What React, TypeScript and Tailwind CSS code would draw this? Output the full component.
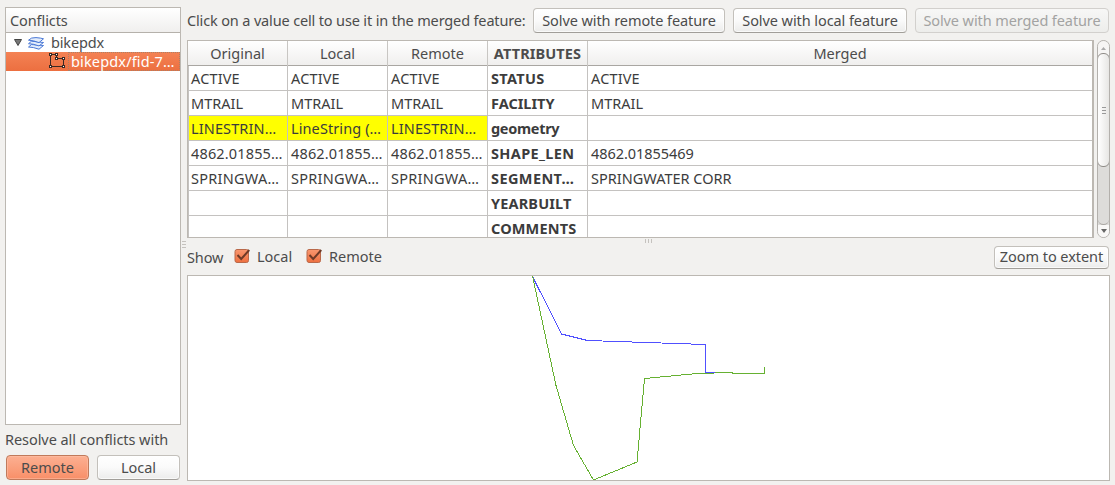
import type { ReactNode } from "react";

type Cell = { text: string; tracking: string };

const none: Cell = { text: "", tracking: "" };
const active: Cell = { text: "ACTIVE", tracking: "tracking-[0.15px]" };
const mtrail: Cell = { text: "MTRAIL", tracking: "tracking-[0px]" };
const line: Cell = { text: "LINESTRIN…", tracking: "tracking-[0.12px]" };
const length: Cell = { text: "4862.01855…", tracking: "tracking-[0.15px]" };
const spring: Cell = { text: "SPRINGWA…", tracking: "tracking-[0.25px]" };

type Row = { cells: Cell[]; name: Cell; merged: Cell; conflict?: boolean };

const rows: Row[] = [
  { cells: [active, active, active], name: { text: "STATUS", tracking: "tracking-[0.3px]" }, merged: active },
  { cells: [mtrail, mtrail, mtrail], name: { text: "FACILITY", tracking: "tracking-[0px]" }, merged: mtrail },
  {
    cells: [line, { text: "LineString (…", tracking: "tracking-[0.1px]" }, line],
    name: { text: "geometry", tracking: "tracking-[-0.3px]" },
    merged: none,
    conflict: true,
  },
  {
    cells: [length, length, length],
    name: { text: "SHAPE_LEN", tracking: "tracking-[0.35px]" },
    merged: { text: "4862.01855469", tracking: "tracking-[-0.05px]" },
  },
  {
    cells: [spring, spring, spring],
    name: { text: "SEGMENT…", tracking: "tracking-[0.4px]" },
    merged: { text: "SPRINGWATER CORR", tracking: "tracking-[0px]" },
  },
  { cells: [none, none, none], name: { text: "YEARBUILT", tracking: "tracking-[0.15px]" }, merged: none },
  { cells: [none, none, none], name: { text: "COMMENTS", tracking: "tracking-[0.15px]" }, merged: none },
];

function Button({ className, children }: { className: string; children: ReactNode }) {
  return (
    <button
      className={`flex shrink-0 items-center justify-center whitespace-nowrap rounded-[4px] border ${className}`}
    >
      {children}
    </button>
  );
}

const plain =
  "border-[#c3c0bb] border-b-[#a19e99] bg-linear-to-b from-white via-[#fafafa] to-[#ececeb] shadow-[inset_0_0_0_1px_#ffffffb0]";

function LayersIcon() {
  return (
    <svg className="ml-[5px] h-4 w-[18px] shrink-0" viewBox="0 0 18 16" fill="#e4edfb" stroke="#4a78d6" strokeWidth="1">
      <path d="M1.5 12 4.5 9.5 16.5 10.5 12 14.2Q6 12 1.5 12Z" />
      <path d="M1.5 8.7 4.5 6.2 16.5 7.5 12 10.9Q6 8.7 1.5 8.7Z" />
      <path d="M1.5 5.2Q4 2.2 9 2.6T16.5 3.8L12 7.6Q6 5.2 1.5 5.2Z" />
    </svg>
  );
}

function PolygonIcon() {
  return (
    <svg className="h-[17px] w-[17px] shrink-0" viewBox="0 0 17 17" fill="none" stroke="#3b2a24" shapeRendering="crispEdges">
      <path d="M1.5 1.5V13.5H14.5V5.5H7.5V1.5Z" />
      <path d="M.5 .5h2v2h-2zM6.5 .5h2v2h-2zM6.5 4.5h2v2h-2zM13.5 4.5h2v2h-2zM.5 12.5h2v2h-2zM13.5 12.5h2v2h-2z" fill="#fff" />
    </svg>
  );
}

function Check() {
  return (
    <svg className="-mt-[2px] h-4 w-4 shrink-0" viewBox="0 0 16 16" fill="none">
      <defs>
        <linearGradient id="check" x2="0" y2="1">
          <stop stopColor="#f9976f" />
          <stop offset="1" stopColor="#ee7040" />
        </linearGradient>
      </defs>
      <rect x="1" y="1.5" width="13.5" height="13" rx="2" fill="url(#check)" stroke="#b9694a" />
      <path d="M3.5 7 7.2 11 15.3 2" stroke="#6e3a27" strokeWidth="2" />
    </svg>
  );
}

function Tree() {
  return (
    <div className="flex h-[418px] flex-col border border-[#bcb8b2] bg-white">
      <div className="flex h-[25px] shrink-0 items-center border-b border-[#b5b1ab] bg-linear-to-b from-white to-[#f0efee] pl-1">
        <span className="tracking-[-0.1px]">Conflicts</span>
      </div>
      <div className="flex h-[19px] items-center pl-[8px]">
        <svg className="h-[7px] w-[8px]" viewBox="0 0 8 7">
          <path d="M.5 .5h7L4 6.5z" fill="#777" stroke="#444" />
        </svg>
        <LayersIcon />
        <span className="ml-[6px] tracking-[-0.15px]">bikepdx</span>
      </div>
      <div className="flex h-[19px] items-center bg-linear-to-b from-[#f48254] to-[#ec6f40] pl-[43px] text-white">
        <PolygonIcon />
        <div className="ml-[2px] flex h-[19px] flex-1 items-center border border-dotted border-[#aa8068] pl-[2px]">
          <span className="whitespace-nowrap tracking-[0.15px]">bikepdx/fid-7…</span>
        </div>
      </div>
    </div>
  );
}

const columns = "grid grid-cols-[100px_100px_100px_100px_504px]";

function Table() {
  return (
    <div className="h-[198px] w-[907px] overflow-hidden border border-r-2 border-[#bcb8b2] bg-white">
      <div className={`${columns} h-[25px] border-b border-[#a9a6a2] bg-linear-to-b from-white to-[#f0efee] leading-[25px]`}>
        <span className="border-r border-[#c8c6c3] text-center">Original</span>
        <span className="border-r border-[#c8c6c3] text-center">Local</span>
        <span className="border-r border-[#c8c6c3] text-center">Remote</span>
        <span className="border-r border-[#c8c6c3] text-center font-bold tracking-[0.1px]">ATTRIBUTES</span>
        <span className="text-center">Merged</span>
      </div>
      {rows.map((row) => (
        <div key={row.name.text} className={`${columns} h-[25px] border-b border-[#c4c2c0] leading-[25px] text-[#3c3c3c]`}>
          {row.cells.map((cell, i) => (
            <span
              key={i}
              className={`overflow-hidden whitespace-nowrap border-r border-[#c4c2c0] ${i === 0 ? "border-l pl-[2px]" : "pl-[3px]"} ${cell.tracking} ${row.conflict ? "bg-[#ffff00]" : ""}`}
            >
              {cell.text}
            </span>
          ))}
          <span className={`overflow-hidden whitespace-nowrap border-r border-[#c4c2c0] pl-[3px] font-bold ${row.name.tracking}`}>
            {row.name.text}
          </span>
          <span className={`pl-[3px] ${row.merged.tracking}`}>{row.merged.text}</span>
        </div>
      ))}
    </div>
  );
}

function Scrollbar() {
  return (
    <div className="flex h-[198px] w-[13px] flex-col overflow-hidden rounded-[7px] border border-[#b3b0ac] bg-[#dddcda]">
      <div className="-mb-[5px] flex h-[17px] shrink-0 items-start justify-center bg-[#f6f5f4] pt-[6px]">
        <svg className="h-[3px] w-[5px]" viewBox="0 0 5 3">
          <path d="M0 3 2.5 0 5 3z" fill="#aaa" />
        </svg>
      </div>
      <div className="-mx-px flex h-[114px] shrink-0 flex-col items-center justify-center gap-[2px] rounded-[6px] border border-[#8f8c88] bg-linear-to-r from-white to-[#e7e6e4]">
        <i className="h-px w-[4px] bg-[#999]" />
        <i className="h-px w-[4px] bg-[#999]" />
        <i className="h-px w-[4px] bg-[#999]" />
      </div>
      <div className="flex-1 rounded-b-[6px] border-b border-[#aaa7a3]" />
      <div className="-mt-[5px] flex h-[17px] shrink-0 items-end justify-center pb-[4px] bg-linear-to-b from-transparent from-30% to-[#f9f8f7] to-30%">
        <svg className="h-[4px] w-[6px]" viewBox="0 0 6 4">
          <path d="M0 0h6L3 4z" fill="#666" />
        </svg>
      </div>
    </div>
  );
}

export default function App() {
  return (
    <div className="flex h-[485px] w-[1115px] overflow-hidden bg-[#f2f1ef] pl-[5px] font-['Noto_Sans',sans-serif] text-[14.5px] leading-[19px] text-[#4c4c4c]">
      <div className="flex w-[176px] shrink-0 flex-col pt-[7px]">
        <Tree />
        <div className="mt-[5px] h-[19px] whitespace-nowrap tracking-[-0.06px]">Resolve all conflicts with</div>
        <div className="mt-[6px] flex gap-2 pl-px">
          <Button className="h-[25px] w-[83px] border-[#c07a5b] bg-linear-to-b from-[#fcb092] to-[#f88f68] shadow-[inset_0_0_0_1px_#ffc3ab80]">
            <span>Remote</span>
          </Button>
          <Button className={`h-[25px] w-[83px] ${plain}`}>
            <span>Local</span>
          </Button>
        </div>
      </div>
      <div className="flex w-[6px] shrink-0 flex-col items-center gap-[2px] pt-[241px]">
        <i className="h-px w-[4px] bg-[#c5c2be]" />
        <i className="h-px w-[4px] bg-[#c5c2be]" />
        <i className="h-px w-[4px] bg-[#c5c2be]" />
      </div>
      <div className="flex w-[923px] shrink-0 flex-col pt-2">
        <div className="flex h-[25px] items-center">
          <span className="w-[346px] shrink-0 whitespace-nowrap tracking-[-0.15px]">
            Click on a value cell to use it in the merged feature:
          </span>
          <Button className={`h-[25px] w-[192px] ${plain}`}>
            <span className="tracking-[-0.08px]">Solve with remote feature</span>
          </Button>
          <Button className={`ml-2 h-[25px] w-[174px] ${plain}`}>
            <span className="tracking-[-0.08px]">Solve with local feature</span>
          </Button>
          <Button className="ml-2 h-[25px] w-[194px] border-[#d2d0cd] bg-linear-to-b from-[#f7f7f6] to-[#ededeb] text-[#a3a3a2]">
            <span className="tracking-[-0.1px]">Solve with merged feature</span>
          </Button>
        </div>
        <div className="mt-[7px] flex justify-between">
          <Table />
          <Scrollbar />
        </div>
        <div className="flex h-[7px] justify-center gap-[2px] pt-px">
          <i className="h-[4px] w-px bg-[#c5c2be]" />
          <i className="h-[4px] w-px bg-[#c5c2be]" />
          <i className="h-[4px] w-px bg-[#c5c2be]" />
        </div>
        <div className="flex h-[24px] items-center pr-px">
          <span className="w-[47px] tracking-[-0.1px]">Show</span>
          <Check />
          <span className="-mt-[2px] ml-[7px] w-[49px]">Local</span>
          <Check />
          <span className="-mt-[2px] ml-[7px]">Remote</span>
          <Button className={`ml-auto h-[23px] w-[115px] ${plain}`}>
            <span className="-mt-px tracking-[-0.05px]">Zoom to extent</span>
          </Button>
        </div>
        <div className="mt-[6px] h-[206px] border border-[#bcb8b2] bg-white">
          <svg className="h-[204px] w-[921px]" viewBox="188 276 921 204" fill="none" shapeRendering="crispEdges">
            <path stroke="#5050ff" d="M533 277.5 561.5 334 587.5 340.5 705.5 344.5V372.5H715" />
            <path stroke="#66b132" d="M532.5 276 556 385.5 573.5 445.5 593.5 480 637 462 644.5 378.5 697 373.5H705M705 373.5H714M715 372.5H732L732 373.5H764.5V367" />
          </svg>
        </div>
      </div>
    </div>
  );
}
